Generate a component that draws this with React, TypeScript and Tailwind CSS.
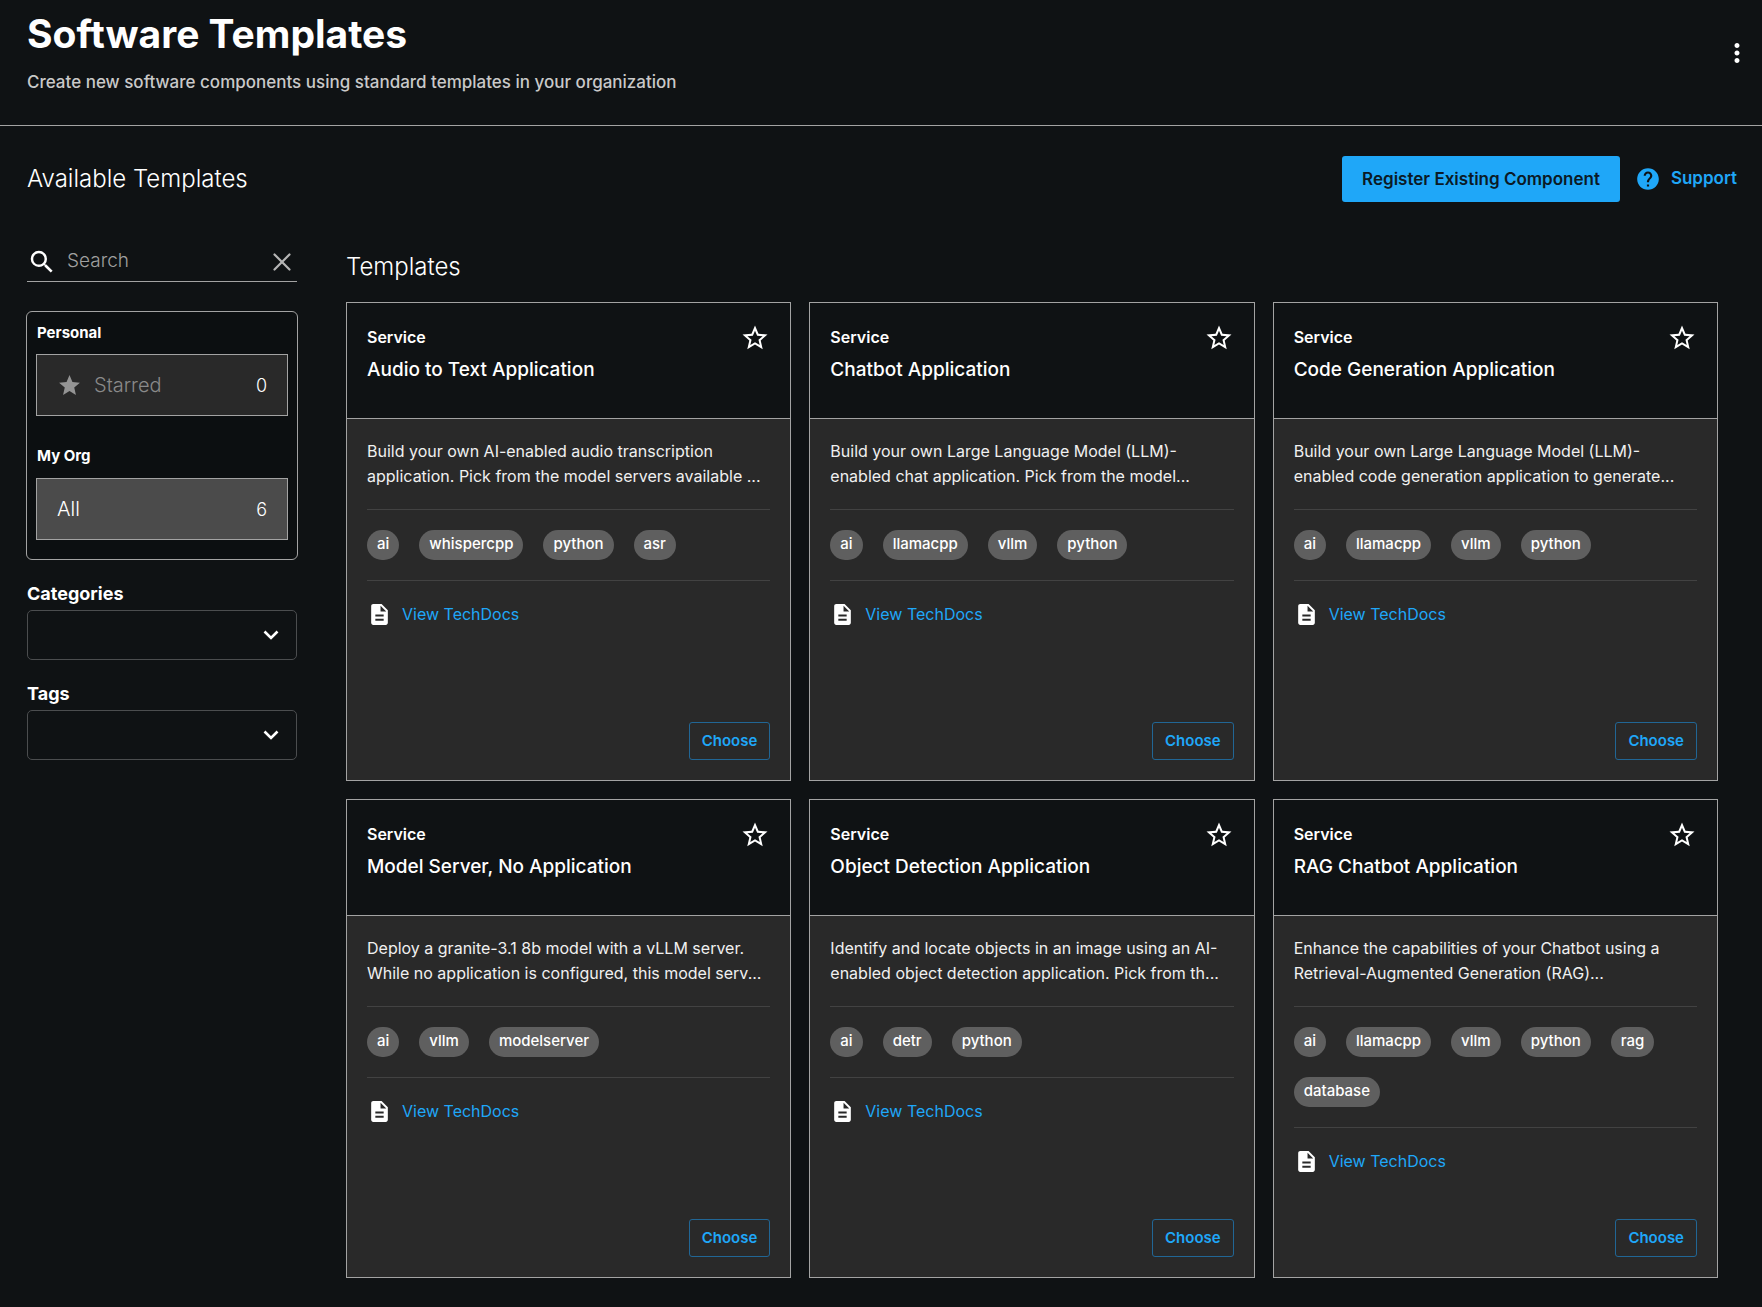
import React, { useState } from 'react';
import { MdDescription, MdHelp, MdMoreVert, MdSearch, MdStar, MdStarBorder } from 'react-icons/md';

interface Template {
    title: string;
    description: string;
    tags: string[];
}

const templates: Template[] = [
    {
        title: 'Audio to Text Application',
        description: 'Build your own AI-enabled audio transcription\napplication. Pick from the model servers available ...',
        tags: ['ai', 'whispercpp', 'python', 'asr'],
    },
    {
        title: 'Chatbot Application',
        description: 'Build your own Large Language Model (LLM)-\nenabled chat application. Pick from the model...',
        tags: ['ai', 'llamacpp', 'vllm', 'python'],
    },
    {
        title: 'Code Generation Application',
        description: 'Build your own Large Language Model (LLM)-\nenabled code generation application to generate...',
        tags: ['ai', 'llamacpp', 'vllm', 'python'],
    },
    {
        title: 'Model Server, No Application',
        description: 'Deploy a granite-3.1 8b model with a vLLM server.\nWhile no application is configured, this model serv...',
        tags: ['ai', 'vllm', 'modelserver'],
    },
    {
        title: 'Object Detection Application',
        description: 'Identify and locate objects in an image using an AI-\nenabled object detection application. Pick from th...',
        tags: ['ai', 'detr', 'python'],
    },
    {
        title: 'RAG Chatbot Application',
        description: 'Enhance the capabilities of your Chatbot using a\nRetrieval-Augmented Generation (RAG)...',
        tags: ['ai', 'llamacpp', 'vllm', 'python', 'rag', 'database'],
    },
];

const FilterSelect: React.FC<{ id: string; label: string }> = ({ id, label }) => (
    <div>
        <label htmlFor={id} className="block text-[18px] leading-6 font-bold mb-1">{label}</label>
        <div className="relative">
            <select
                id={id}
                className="block w-full h-[50px] appearance-none rounded-[5px] border border-[#4b4d4f] bg-transparent px-4 outline-none"
            />
            <svg className="absolute right-[18px] top-5 pointer-events-none" width="16" height="11" viewBox="0 0 16 11" fill="none" stroke="#fff" strokeWidth="2.6">
                <path d="M1.5 1.5 8 8l6.5-6.5" />
            </svg>
        </div>
    </div>
);

const TemplateCard: React.FC<{ template: Template }> = ({ template }) => (
    <article className="flex flex-col border border-[#a3a3a3] bg-[#292929]">
        <header className="flex items-start justify-between h-[116px] shrink-0 border-b border-[#a3a3a3] bg-[#0f1214] pt-5 pl-5 pr-5">
            <div>
                <p className="text-[16px] leading-7 font-semibold">Service</p>
                <h3 className="text-[19px] leading-[38px] font-medium">{template.title}</h3>
            </div>
            <button type="button" aria-label={`Add ${template.title} to favorites`}>
                <MdStarBorder size={30} />
            </button>
        </header>
        <div className="flex flex-1 flex-col px-5 pb-5">
            <p className="py-5 text-[16px] leading-[25px] whitespace-pre-line text-[#f0f0f0]">{template.description}</p>
            <ul className="flex flex-wrap gap-5 border-y border-[#424242] py-5">
                {template.tags.map(tag => (
                    <li key={tag} className="h-[30px] rounded-full bg-[#5f5f5f] px-[10px] text-[15px] leading-7 font-medium">{tag}</li>
                ))}
            </ul>
            <div className="flex items-center gap-2.5 pt-[19px] mb-11">
                <MdDescription size={25} />
                <a href="#techdocs" className="text-[16px] leading-7 text-[#1fa7f8]">View TechDocs</a>
            </div>
            <button type="button" className="mt-auto self-end h-[38px] rounded-[3px] border border-[#216695] px-3 text-[15px] font-semibold text-[#1fa7f8]">
                Choose
            </button>
        </div>
    </article>
);

const App: React.FC = () => {
    const [search, setSearch] = useState('');

    return (
        <div className="min-h-screen bg-[#0f1214] text-white font-['Inter','Liberation_Sans',sans-serif]">
            <header className="flex items-start justify-between border-b border-[#a3a3a3] pl-[27px] pr-[10px] pt-2 h-[126px]">
                <div>
                    <h1 className="text-[39px] leading-[52px] font-bold">Software Templates</h1>
                    <p className="text-[17px] leading-6 mt-2.5 font-medium text-[#c9c9c9]">
                        Create new software components using standard templates in your organization
                    </p>
                </div>
                <button type="button" aria-label="More" className="mt-[30px]">
                    <MdMoreVert size={30} />
                </button>
            </header>

            <div className="flex items-center justify-between pl-[27px] pr-[25px] pt-[30px]">
                <h2 className="text-[24px] leading-8 font-light">Available Templates</h2>
                <div className="flex items-center">
                    <button type="button" className="h-[46px] rounded-[3px] bg-[#1fa7f8] px-5 pt-0.5 text-[17px] font-semibold text-[#0b1a26]">
                        Register Existing Component
                    </button>
                    <button type="button" className="flex items-center gap-2.5 ml-[15px] text-[17px] font-semibold text-[#1fa7f8]">
                        <MdHelp size={26} />
                        Support
                    </button>
                </div>
            </div>

            <div className="flex gap-12 pl-[26px] pr-11 pt-9 pb-7">
                <aside className="w-[272px] shrink-0">
                    <div className="flex items-center h-11 mx-px pt-1 border-b border-[#a3a3a3]">
                        <MdSearch size={30} className="shrink-0" />
                        <input
                            type="text"
                            aria-label="Search"
                            placeholder="Search"
                            value={search}
                            onChange={e => setSearch(e.target.value)}
                            className="min-w-0 flex-1 ml-2.5 bg-transparent text-[19px] font-light outline-none placeholder:text-[#a0a0a0]"
                        />
                        <button type="button" aria-label="Clear" onClick={() => setSearch('')} className="mr-1.5">
                            <svg width="18" height="18" viewBox="0 0 18 18" fill="none" stroke="#b5b5b5" strokeWidth="2.2" strokeLinecap="round">
                                <path d="M1.5 1.5l15 15M16.5 1.5l-15 15" />
                            </svg>
                        </button>
                    </div>

                    <div className="mt-[29px] rounded-md border border-[#a3a3a3] bg-[#0c0f11] px-[9px] pb-[19px]">
                        <h3 className="pt-[9px] pl-px text-[15px] leading-6 font-bold">Personal</h3>
                        <button type="button" className="mt-[9px] flex w-full items-center h-[62px] border border-[#a3a3a3] bg-[#292929] px-5">
                            <MdStar size={25} className="text-[#949494]" />
                            <span className="ml-3 text-[20px] font-light text-[#8a8a8a]">Starred</span>
                            <span className="ml-auto text-[18px] font-light">0</span>
                        </button>
                        <h3 className="mt-7 pl-px text-[15px] leading-6 font-bold">My Org</h3>
                        <button type="button" className="mt-2.5 flex w-full items-center h-[62px] border border-[#a3a3a3] bg-[#4b4b4b] px-5">
                            <span className="text-[20px] font-light">All</span>
                            <span className="ml-auto text-[18px] font-light">6</span>
                        </button>
                    </div>

                    <div className="mx-px mt-[22px] flex flex-col gap-[22px]">
                        <FilterSelect id="categories" label="Categories" />
                        <FilterSelect id="tags" label="Tags" />
                    </div>
                </aside>

                <main className="min-w-0 flex-1">
                    <h2 className="pt-[13px] pb-[19px] text-[24px] leading-8 font-light">Templates</h2>
                    <div className="grid auto-rows-fr grid-cols-3 gap-[18px]">
                        {templates.map(template => (
                            <TemplateCard key={template.title} template={template} />
                        ))}
                    </div>
                </main>
            </div>
        </div>
    );
};

export default App;
